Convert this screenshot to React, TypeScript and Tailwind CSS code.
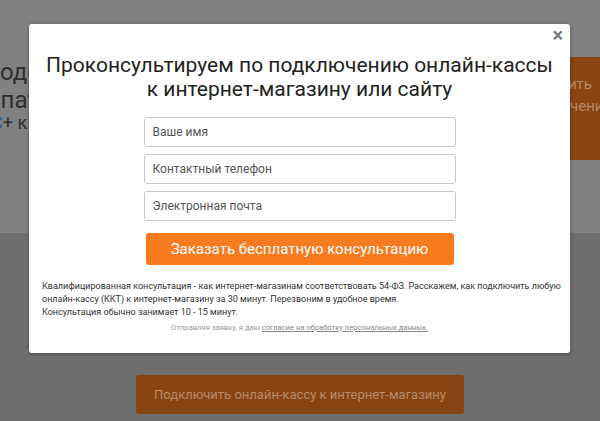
import React from "react";

const font = { fontFamily: "Roboto, 'Noto Sans', sans-serif" };

const fields = ["Ваше имя", "Контактный телефон", "Электронная почта"];

const App = () => {
  return (
    <div className="relative w-[600px] h-[421px] overflow-hidden" style={font}>
      {/* page behind the popup */}
      <section className="h-[233px] bg-[#818181] flex justify-between pt-[57px] overflow-hidden">
        <div className="mt-[1px] text-[#2e2e2e] whitespace-nowrap">
          <div className="-ml-[21px] text-[24px] leading-[28px]">Модели онлайн-касс</div>
          <div className="-ml-[15px] text-[24px] leading-[28px]">Спатентом и ЕНВД</div>
          <div className="-ml-[9px] text-[18px] leading-[18px]">
            <span className="text-[#2c5a8e]">С</span>+ к сайту
          </div>
        </div>
        <div className="shrink-0 w-[200px] h-[103px] -mr-[70px] bg-[#8b4513] text-[#b58a6a] text-[15px] leading-[22px] pt-[16px] pl-[33px] whitespace-nowrap">
          <div>Подключить</div>
          <div>о подключении к</div>
        </div>
      </section>
      <section className="h-[188px] bg-[#6f6f6f] flex justify-center pt-[142px]">
        <div className="w-[328px] h-[39px] rounded-[3px] bg-[#894511] text-[#b68b6c] text-[13px] flex items-center justify-center whitespace-nowrap">
          Подключить онлайн-кассу к интернет-магазину
        </div>
      </section>

      {/* popup */}
      <div className="absolute left-[29px] top-[24px] w-[541px] h-[329px] bg-white rounded-[3px] shadow-[0_1px_4px_rgba(0,0,0,0.3)] pt-[29px] px-[13px]">
        <button className="absolute right-[7px] top-[1px] text-[20px] font-bold text-[#7a7a7a] leading-none">×</button>
        <h2 className="text-center text-[21px] leading-[24px] text-[#222]">
          Проконсультируем по подключению онлайн-кассы
          <br />к интернет-магазину или сайту
        </h2>
        <div className="mt-[16px] flex flex-col items-center gap-[7px]">
          {fields.map((f) => (
            <input
              key={f}
              placeholder={f}
              className="w-[312px] h-[30px] border border-[#c8c8c8] rounded-[3px] px-[8px] text-[12px] placeholder:text-[#555] outline-none"
              style={font}
            />
          ))}
        </div>
        <div className="flex justify-center mt-[12px]">
          <button className="w-[308px] h-[32px] rounded-[3px] bg-[#f97b1f] text-white text-[15px]">
            Заказать бесплатную консультацию
          </button>
        </div>
        <p className="mt-[15px] whitespace-nowrap text-[9px] leading-[13px] text-[#333]">
          Квалифицированная консультация - как интернет-магазинам соответствовать 54-ФЗ. Расскажем, как подключить любую
          <br />
          онлайн-кассу (ККТ) к интернет-магазину за 30 минут. Перезвоним в удобное время.
          <br />
          Консультация обычно занимает 10 - 15 минут.
        </p>
        <p className="mt-[3px] text-center text-[7.6px] leading-[12px] text-[#999]">
          Отправляя заявку, я даю <a className="underline text-[#888]">согласие на обработку персональных данных.</a>
        </p>
      </div>
    </div>
  );
};

export default App;
